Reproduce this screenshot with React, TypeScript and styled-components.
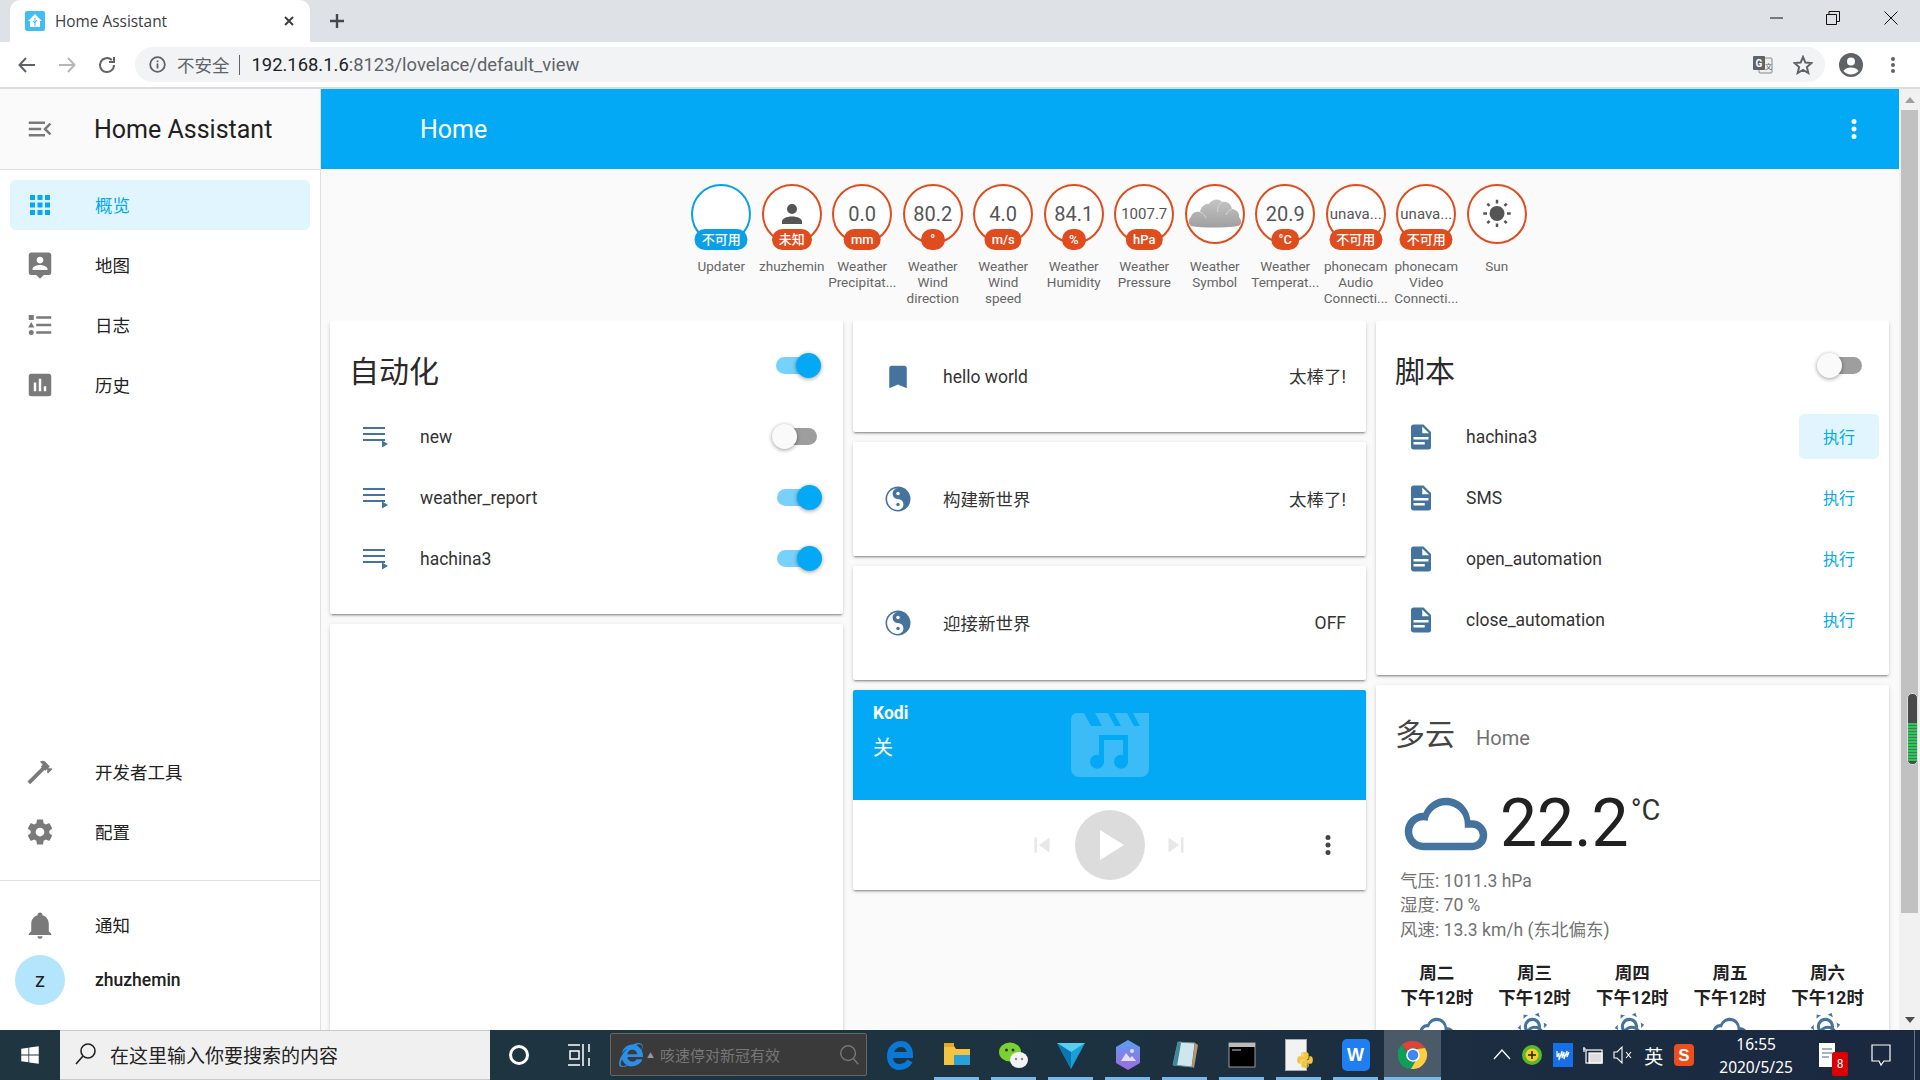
import React from 'react';
import styled, { createGlobalStyle } from 'styled-components';
import { FaInternetExplorer, FaPython, FaWindows } from 'react-icons/fa';

const P = {
  apps: 'M16,20H20V16H16M16,14H20V10H16M10,8H14V4H10M16,8H20V4H16M10,14H14V10H10M4,14H8V10H4M4,20H8V16H4M10,20H14V16H10M4,8H8V4H4V8Z',
  map: 'M18,16H6V15.1C6,13.1 10,12 12,12C14,12 18,13.1 18,15.1M12,5.3C13.5,5.3 14.7,6.5 14.7,8C14.7,9.5 13.5,10.7 12,10.7C10.5,10.7 9.3,9.5 9.3,8C9.3,6.5 10.5,5.3 12,5.3M19,2H5C3.89,2 3,2.89 3,4V18A2,2 0 0,0 5,20H9L12,23L15,20H19A2,2 0 0,0 21,18V4C21,2.89 20.1,2 19,2Z',
  list: 'M5,9.5L7.5,14H2.5L5,9.5M3,4H7V8H3V4M5,20A2,2 0 0,0 7,18A2,2 0 0,0 5,16A2,2 0 0,0 3,18A2,2 0 0,0 5,20M9,5V7H21V5H9M9,19H21V17H9V19M9,13H21V11H9V13Z',
  poll: 'M17,17H15V13H17M13,17H11V7H13M9,17H7V10H9M19,3H5C3.89,3 3,3.89 3,5V19A2,2 0 0,0 5,21H19A2,2 0 0,0 21,19V5C21,3.89 20.1,3 19,3Z',
  hammer: 'M2 19.63L13.43 8.2L12.72 7.5L14.14 6.07L12 3.89C13.2 2.7 15.09 2.7 16.27 3.89L19.87 7.5L18.45 8.91H21.29L22 9.62L18.45 13.21L17.74 12.5V9.62L16.27 11.04L15.56 10.33L4.13 21.76L2 19.63Z',
  cog: 'M12,15.5A3.5,3.5 0 0,1 8.5,12A3.5,3.5 0 0,1 12,8.5A3.5,3.5 0 0,1 15.5,12A3.5,3.5 0 0,1 12,15.5M19.43,12.97C19.47,12.65 19.5,12.33 19.5,12C19.5,11.67 19.47,11.34 19.43,11L21.54,9.37C21.73,9.22 21.78,8.95 21.66,8.73L19.66,5.27C19.54,5.05 19.27,4.96 19.05,5.05L16.56,6.05C16.04,5.66 15.5,5.32 14.87,5.07L14.5,2.42C14.46,2.18 14.25,2 14,2H10C9.75,2 9.54,2.18 9.5,2.42L9.13,5.07C8.5,5.32 7.96,5.66 7.44,6.05L4.95,5.05C4.73,4.96 4.46,5.05 4.34,5.27L2.34,8.73C2.21,8.95 2.27,9.22 2.46,9.37L4.57,11C4.53,11.34 4.5,11.67 4.5,12C4.5,12.33 4.53,12.65 4.57,12.97L2.46,14.63C2.27,14.78 2.21,15.05 2.34,15.27L4.34,18.73C4.46,18.95 4.73,19.03 4.95,18.95L7.44,17.94C7.96,18.34 8.5,18.68 9.13,18.93L9.5,21.58C9.54,21.82 9.75,22 10,22H14C14.25,22 14.46,21.82 14.5,21.58L14.87,18.93C15.5,18.67 16.04,18.34 16.56,17.94L19.05,18.95C19.27,19.03 19.54,18.95 19.66,18.73L21.66,15.27C21.78,15.05 21.73,14.78 21.54,14.63L19.43,12.97Z',
  bell: 'M21,19V20H3V19L5,17V11C5,7.9 7.03,5.17 10,4.29C10,4.19 10,4.1 10,4A2,2 0 0,1 12,2A2,2 0 0,1 14,4C14,4.1 14,4.19 14,4.29C16.97,5.17 19,7.9 19,11V17L21,19M14,21A2,2 0 0,1 12,23A2,2 0 0,1 10,21',
  menuOpen: 'M21,15.61L19.59,17L14.58,12L19.59,7L21,8.39L17.44,12L21,15.61M3,6H16V8H3V6M3,13V11H13V13H3M3,18V16H16V18H3Z',
  dots: 'M12,16A2,2 0 0,1 14,18A2,2 0 0,1 12,20A2,2 0 0,1 10,18A2,2 0 0,1 12,16M12,10A2,2 0 0,1 14,12A2,2 0 0,1 12,14A2,2 0 0,1 10,12A2,2 0 0,1 12,10M12,4A2,2 0 0,1 14,6A2,2 0 0,1 12,8A2,2 0 0,1 10,6A2,2 0 0,1 12,4Z',
  bookmark: 'M17,3H7A2,2 0 0,0 5,5V21L12,18L19,21V5C19,3.89 18.1,3 17,3Z',
  file: 'M13,9H18.5L13,3.5V9M6,2H14L20,8V20A2,2 0 0,1 18,22H6C4.89,22 4,21.1 4,20V4C4,2.89 4.89,2 6,2M15,18V16H6V18H15M18,14V12H6V14H18Z',
  account: 'M12,4A4,4 0 0,1 16,8A4,4 0 0,1 12,12A4,4 0 0,1 8,8A4,4 0 0,1 12,4M12,14C16.42,14 20,15.79 20,18V20H4V18C4,15.79 7.58,14 12,14Z',
  sun: 'M3.55,18.54L4.96,19.95L6.76,18.16L5.34,16.74M11,22.45C11.32,22.45 13,22.45 13,22.45V19.5H11M12,5.5A6,6 0 0,0 6,11.5A6,6 0 0,0 12,17.5A6,6 0 0,0 18,11.5C18,8.18 15.31,5.5 12,5.5M20,12.5H23V10.5H20M17.24,18.16L19.04,19.95L20.45,18.54L18.66,16.74M20.45,4.46L19.04,3.05L17.24,4.84L18.66,6.26M13,0.55H11V3.5H13M4,10.5H1V12.5H4M6.76,4.84L4.96,3.05L3.55,4.46L5.34,6.26L6.76,4.84Z',
  cloudy: 'M6,19A5,5 0 0,1 1,14A5,5 0 0,1 6,9C7,6.65 9.3,5 12,5C15.43,5 18.24,7.66 18.5,11.03L19,11A4,4 0 0,1 23,15A4,4 0 0,1 19,19H6M19,13H17V12A5,5 0 0,0 12,7C9.5,7 7.45,8.82 7.06,11.19C6.73,11.07 6.37,11 6,11A3,3 0 0,0 3,14A3,3 0 0,0 6,17H19A2,2 0 0,0 21,15A2,2 0 0,0 19,13Z',
  partly: 'M12.74,5.47C15.1,6.5 16.35,9.03 15.92,11.46C17.19,12.56 18,14.19 18,16V16.17C18.31,16.06 18.65,16 19,16A3,3 0 0,1 22,19A3,3 0 0,1 19,22H6A4,4 0 0,1 2,18A4,4 0 0,1 6,14H6.27C5,12.45 4.6,10.24 5.5,8.26C6.72,5.5 9.97,4.24 12.74,5.47M11.93,7.3C10.16,6.5 8.09,7.31 7.31,9.07C6.85,10.09 6.93,11.22 7.41,12.13C8.5,10.83 10.16,10 12,10C12.7,10 13.38,10.12 14,10.34C13.94,9.06 13.18,7.86 11.93,7.3M13.55,3.64C13,3.4 12.45,3.23 11.88,3.12L14.37,1.82L15.27,4.71C14.76,4.29 14.19,3.93 13.55,3.64M6.09,4.44C5.6,4.79 5.17,5.19 4.8,5.63L4.91,2.82L7.87,3.5C7.25,3.71 6.65,4.03 6.09,4.44M18,9.71C17.91,9.12 17.78,8.55 17.59,8L19.97,9.5L17.92,11.73C18.03,11.08 18.05,10.4 18,9.71M3.04,11.3C3.11,11.9 3.24,12.47 3.43,13L1.06,11.5L3.1,9.28C3,9.93 2.97,10.61 3.04,11.3M19,18H16V16A4,4 0 0,0 12,12A4,4 0 0,0 8,16H6A2,2 0 0,0 4,18A2,2 0 0,0 6,20H19A1,1 0 0,0 20,19A1,1 0 0,0 19,18Z',
  prev: 'M6,18V6H8V18H6M9.5,12L18,6V18L9.5,12Z',
  next: 'M16,18H18V6H16M6,18L14.5,12L6,6V18Z',
};

const BLUE = '#03a9f4';
const STEEL = '#44739e';
const ORANGE = '#df4c1e';
const GREY = '#7a7a7a';

const Global = createGlobalStyle`
  html, body { margin: 0; padding: 0; width: 1920px; height: 1080px; overflow: hidden; }
  body { font-family: Roboto, "Noto Sans CJK SC", sans-serif; color: #212121; background: #fff; }
  * { box-sizing: border-box; }
`;

const Page = styled.div`
  width: 1920px; height: 1080px; display: flex; flex-direction: column; overflow: hidden;
`;

/* ---------- icon ---------- */
const IconSvg = styled.svg<{ $size: number; $color: string }>`
  width: ${p => p.$size}px; height: ${p => p.$size}px; fill: ${p => p.$color}; flex: none; display: block;
`;
const Mdi = ({ d, size = 30, color = GREY }: { d: string; size?: number; color?: string }) => (
  <IconSvg $size={size} $color={color} viewBox="0 0 24 24"><path d={d} /></IconSvg>
);

/* ---------- browser chrome ---------- */
const TabStrip = styled.div`
  height: 42px; background: #dee1e6; display: flex; align-items: flex-end; padding-left: 10px; flex: none;
`;
const Tab = styled.div`
  width: 300px; height: 42px; background: #fff; border-radius: 10px 10px 0 0; display: flex; align-items: center;
  padding: 0 14px 0 15px; font: 400 15.4px "Open Sans", sans-serif; color: #3c4043;
`;
const Favicon = styled.svg` width: 20px; height: 20px; margin-right: 10px; flex: none; `;
const TabTitle = styled.span` flex: 1; `;
const TabClose = styled.svg` width: 14px; height: 14px; stroke: #3c4043; stroke-width: 2; fill: none; `;
const NewTab = styled.svg`
  width: 16px; height: 16px; stroke: #45484c; stroke-width: 2.4; fill: none; margin: 0 0 13px 19px;
`;
const WinControls = styled.div`
  margin-left: auto; height: 42px; display: flex; align-items: flex-start;
`;
const WinBtn = styled.div<{ $w?: number }>`
  width: ${p => p.$w ?? 58}px; height: 36px; display: flex; align-items: center; justify-content: center;
`;
const WinIcon = styled.svg` width: 14px; height: 14px; stroke: #111; stroke-width: 1; fill: none; `;

const Toolbar = styled.div`
  height: 47px; flex: none; background: #fff; border-bottom: 2px solid #dadce0; display: flex; align-items: flex-start; padding: 5px 0 0 0;
`;
const NavBtn = styled.div`
  width: 40px; height: 35px; display: flex; align-items: center; justify-content: center; flex: none;
  &:first-child { margin-left: 7px; }
`;
const NavIcon = styled.svg<{ $dim?: boolean }>`
  width: 20px; height: 20px; fill: none; stroke: ${p => (p.$dim ? '#b4b7ba' : '#5f6368')}; stroke-width: 2;
`;
const Omnibox = styled.div`
  width: 1690px; margin-left: 8px; height: 35px; border-radius: 18px; background: #f1f3f4; display: flex; align-items: center;
  padding: 0 12px 0 14px; flex: none;
`;
const OmniInfo = styled.svg` width: 17px; height: 17px; flex: none; margin-right: 11px; `;
const Insecure = styled.span`
  font: 400 17.5px "Noto Sans CJK SC", sans-serif; color: #5f6368; padding-right: 9px; margin-right: 12px; position: relative;
  border-right: 1px solid #5f6368; line-height: 20px;
`;
const UrlHost = styled.span` font: 400 18.4px Roboto, sans-serif; color: #202124; `;
const UrlRest = styled.span` font: 400 18.4px Roboto, sans-serif; color: #5f6368; `;
const OmniEnd = styled.div` margin-left: auto; display: flex; align-items: center; gap: 20px; `;
const Translate = styled.svg` width: 20px; height: 20px; `;
const Star = styled.svg` width: 20px; height: 20px; fill: none; stroke: #5f6368; stroke-width: 2; `;
const ToolEnd = styled.div` display: flex; align-items: center; height: 35px; margin-left: 14px; gap: 18px; `;

/* ---------- layout ---------- */
const Body = styled.div` flex: 1; min-height: 0; display: flex; overflow: hidden; `;

const Sidebar = styled.aside`
  width: 321px; flex: none; display: flex; flex-direction: column; background: #fff; border-right: 1px solid #e0e0e0;
`;
const SideHead = styled.div`
  height: 81px; flex: none; display: flex; align-items: center; padding-left: 25px; gap: 39px; background: #fafafa;
  border-bottom: 1px solid #e0e0e0; font-size: 25px; color: #212121;
`;
const NavList = styled.nav<{ $grow?: boolean; $top?: number; $bottom?: number }>`
  display: flex; flex-direction: column; gap: 10px;
  padding: ${p => p.$top ?? 0}px 0 ${p => p.$bottom ?? 0}px;
  ${p => (p.$grow ? 'flex: 1;' : '')}
`;
const NavItem = styled.div<{ $active?: boolean }>`
  width: 300px; height: 50px; margin-left: 10px; border-radius: 5px; display: flex; align-items: center; padding-left: 15px; gap: 40px;
  font-size: 17.5px; background: ${p => (p.$active ? '#e1f5fe' : 'transparent')}; color: ${p => (p.$active ? BLUE : '#212121')};
`;
const NavText = styled.span` margin-top: -2px; `;
const SideRule = styled.div` height: 1px; background: #e0e0e0; flex: none; `;
const UserRow = styled.div`
  display: flex; align-items: center; height: 50px; padding-left: 15px; gap: 30px; font-size: 17.5px; font-weight: 500; margin: -5px 0 25px;
`;
const Avatar = styled.div`
  width: 50px; height: 50px; border-radius: 50%; background: #b3e5fc; display: flex; align-items: center; justify-content: center;
  font-size: 20px; font-weight: 400;
`;

const Main = styled.main` flex: 1; min-width: 0; display: flex; flex-direction: column; background: #fafafa; `;
const AppBar = styled.header`
  height: 80px; flex: none; background: ${BLUE}; color: #fff; display: flex; align-items: center; justify-content: space-between;
  padding: 0 30px 0 99px; font-size: 25px;
`;
const Badges = styled.div`
  height: 152px; flex: none; padding: 15px 2px 0 0; display: flex; justify-content: center;
`;
const BadgeCell = styled.div`
  width: 70.5px; display: flex; flex-direction: column; align-items: center; flex: none;
`;
const Ring = styled.div<{ $blue?: boolean; $small?: boolean }>`
  width: 60px; height: 60px; border-radius: 50%; border: 2px solid ${p => (p.$blue ? '#0a9fe6' : ORANGE)}; background: #fff;
  position: relative; display: flex; align-items: center; justify-content: center; overflow: visible;
  color: #555; font-size: ${p => (p.$small ? 15 : 20)}px; white-space: nowrap; flex: none;
`;
const Pill = styled.div<{ $blue?: boolean }>`
  position: absolute; top: 43px; left: 50%; transform: translateX(-50%); height: 21px; min-width: 24px; padding: 0 7px; border-radius: 11px;
  background: ${p => (p.$blue ? '#0a9fe6' : ORANGE)}; color: #fff; font-size: 13px; font-weight: 500; line-height: 21px; text-align: center; white-space: nowrap;
`;
const BadgeLabels = styled.div` margin-top: 14px; text-align: center; font-size: 13.5px; line-height: 16px; color: #666; `;
const LabelLine = styled.div` white-space: nowrap; `;

const Grid = styled.div`
  flex: 1; min-height: 0; display: grid; grid-template-columns: repeat(3, 513px); gap: 10px; padding-left: 9px; overflow: hidden;
`;
const Column = styled.div` display: flex; flex-direction: column; gap: 10px; `;
const Card = styled.section<{ $h?: number }>`
  background: #fff; border-radius: 2px; flex: none; ${p => (p.$h ? `height: ${p.$h}px;` : '')}
  box-shadow: 0 2px 2px rgba(0,0,0,.14), 0 1px 5px rgba(0,0,0,.12), 0 3px 1px -2px rgba(0,0,0,.2);
`;
const CardHead = styled.div`
  height: 85px; display: flex; justify-content: space-between; padding: 0 27px 0 19px;
`;
const CardTitle = styled.h2`
  margin: 0; font-size: 30px; font-weight: 400; line-height: 40px; padding-top: 31px; color: #2a2a2a;
`;
const HeadSwitch = styled.div` padding-top: 36px; `;
const Track = styled.div<{ $on?: boolean }>`
  width: 40px; height: 17px; border-radius: 9px; position: relative; flex: none;
  background: ${p => (p.$on ? '#78d1fa' : '#9e9e9e')};
`;
const Knob = styled.div<{ $on?: boolean }>`
  position: absolute; top: -4px; left: ${p => (p.$on ? 20 : -5)}px; width: 25px; height: 25px; border-radius: 50%;
  background: ${p => (p.$on ? BLUE : '#fafafa')};
  box-shadow: 0 1px 4px rgba(0,0,0,.4);
`;
const Switch = ({ on }: { on?: boolean }) => <Track $on={on}><Knob $on={on} /></Track>;

const Row = styled.div`
  height: 61px; display: flex; align-items: center; padding: 0 26px 0 30px; font-size: 17.5px; color: #333;
`;
const RowName = styled.div<{ $cjk?: boolean }>` margin-left: 30px; flex: 1; ${p => (p.$cjk ? 'margin-top: -2px;' : '')} `;
const RowBtn = styled.div<{ $hover?: boolean }>`
  width: 80px; height: 45px; margin-right: -16px; border-radius: 5px; display: flex; align-items: center; justify-content: center;
  padding-bottom: 2px; color: ${BLUE}; font-size: 16px; background: ${p => (p.$hover ? '#e1f5fe' : 'transparent')};
`;
const PlayIcon = styled.svg` width: 30px; height: 30px; fill: ${STEEL}; flex: none; `;
const PlaylistIcon = () => (
  <PlayIcon viewBox="0 0 30 30">
    <rect x="3" y="5" width="22" height="2" /><rect x="3" y="11" width="22" height="2" /><rect x="3" y="17" width="22" height="2" />
    <path d="M22,18.5L28,22L22,25.5Z" />
  </PlayIcon>
);
const EntityCard = styled(Card)`
  display: flex; align-items: center; padding: 0 20px 0 30px; font-size: 17.5px; color: #333;
`;
const EntityState = styled.div<{ $cjk?: boolean }>` margin-left: auto; ${p => (p.$cjk ? 'margin-top: -2px;' : '')} `;
const YinSvg = styled.svg` width: 30px; height: 30px; flex: none; `;
const YinYang = () => (
  <YinSvg viewBox="0 0 24 24">
    <circle cx="12" cy="12" r="10" fill={STEEL} />
    <path d="M12,3.3A8.7,8.7 0 0,0 12,20.7A4.35,4.35 0 0,0 12,12A4.35,4.35 0 0,1 12,3.3Z" fill="#fff" />
    <circle cx="12" cy="7.6" r="1.4" fill="#fff" />
    <circle cx="12" cy="16.4" r="1.4" fill={STEEL} />
  </YinSvg>
);

/* ---------- media ---------- */
const MediaHead = styled.div`
  height: 110px; background: ${BLUE}; color: #fff; padding: 12px 20px 0; position: relative; border-radius: 2px 2px 0 0;
`;
const MediaName = styled.div` font-size: 17.5px; font-weight: 700; line-height: 22px; `;
const MediaState = styled.div` font-size: 20px; line-height: 28px; margin-top: 10px; `;
const MediaArt = styled.svg`
  position: absolute; left: 218px; top: 23px; width: 78px; height: 64px; fill: #fff; opacity: .22;
`;
const MediaBar = styled.div`
  height: 90px; position: relative; display: flex; align-items: center; justify-content: center; gap: 18px;
`;
const NextWrap = styled.div` margin: 0 2px 0 -2px; `;
const PlayBtn = styled.div`
  width: 70px; height: 70px; border-radius: 50%; background: #dcdcdc; display: flex; align-items: center; justify-content: center;
`;
const PlayTri = styled.svg` width: 24px; height: 30px; fill: #fff; margin-left: 4px; `;
const MediaMore = styled.div` position: absolute; right: 23px; top: 30px; `;

/* ---------- weather ---------- */
const WeatherCard = styled(Card)` padding: 30px 12px 0 0; height: 500px; `;
const WeatherTitle = styled.div`
  display: flex; align-items: baseline; padding-left: 19px; height: 40px; line-height: 40px; font-size: 30px; color: #444;
`;
const WeatherPlace = styled.span` font-size: 20px; color: #727272; margin-left: 21px; `;
const WeatherNow = styled.div` margin-top: 23px; height: 91px; padding-left: 25px; display: flex; align-items: center; gap: 9px; `;
const Temp = styled.div` font-size: 66px; line-height: 90px; color: #212121; `;
const TempUnit = styled.div` font-size: 29px; line-height: 30px; align-self: flex-start; margin: 17px 0 0 -7px; color: #333; `;
const Attrs = styled.div` padding-left: 24px; font-size: 17.5px; line-height: 24.4px; color: #727272; `;
const Forecast = styled.div`
  margin-top: 19px; padding-left: 12px; display: grid; grid-template-columns: repeat(5, 97.7px);
`;
const ForecastCol = styled.div`
  display: flex; flex-direction: column; align-items: center; font-size: 17.5px; font-weight: 700; line-height: 24.4px; color: #212121;
`;

/* ---------- scrollbar ---------- */
const Scrollbar = styled.div`
  width: 21px; flex: none; background: #f1f1f1; display: flex; flex-direction: column; padding-left: 2px; padding-right: 2px; position: relative;
  align-items: stretch;
`;
const ScrollArrow = styled.div<{ $h: number }>`
  height: ${p => p.$h}px; flex: none; display: flex; align-items: center; justify-content: center;
`;
const ArrowTri = styled.svg<{ $c: string }>` width: 10px; height: 6px; fill: ${p => p.$c}; `;
const Thumb = styled.div` height: 803px; background: #c1c1c1; flex: none; `;
const ScrollFill = styled.div` flex: 1; `;
const Pillbar = styled.div`
  position: absolute; top: 604px; left: 8px; width: 11px; height: 72px; border-radius: 5px; background: #4a4a4a;
  border: 1px solid #ddd; overflow: hidden; padding-top: 29px;
`;
const PillGreen = styled.div`
  height: 38px; background: repeating-linear-gradient(180deg, #22cc55 0 2px, #55705c 2px 3px);
`;

/* ---------- taskbar ---------- */
const Taskbar = styled.footer`
  height: 50px; flex: none; display: flex; align-items: stretch; color: #fff;
  background: linear-gradient(90deg, #1f3640 0%, #1d3340 50%, #1a2840 100%);
`;
const StartBtn = styled.div` width: 60px; display: flex; align-items: center; justify-content: center; flex: none; `;
const SearchBox = styled.div`
  width: 430px; flex: none; background: #f0f0f0; display: flex; align-items: center; padding: 0 0 2px 14px; gap: 12px; color: #222;
  font: 400 19px "Noto Sans CJK SC", sans-serif; border: 1px solid #c8c8c8; border-width: 1px 0;
`;
const SearchGlass = styled.svg` width: 24px; height: 24px; fill: none; stroke: #222; stroke-width: 1.6; flex: none; `;
const AdGlass = styled(SearchGlass)` stroke: #777; width: 22px; height: 22px; `;
const BarSlot = styled.div<{ $w: number }>` width: ${p => p.$w}px; flex: none; display: flex; align-items: center; justify-content: center; `;
const TaskSvg = styled.svg` width: 26px; height: 26px; fill: none; stroke: #fff; `;
const AdWidget = styled.div`
  width: 257px; flex: none; margin: 3px 4px 4px 0; background: #3a3a3a; border: 1px solid #666; border-radius: 2px; display: flex; align-items: center;
  padding: 0 6px 0 8px; font: 400 15px "Noto Sans CJK SC", sans-serif; color: #777;
`;
const AdCaret = styled.span` font-size: 7px; color: #999; margin: 0 6px 0 4px; `;
const AdText = styled.span` flex: 1; `;
const Tile = styled.div<{ $running?: boolean; $active?: boolean }>`
  width: 57px; flex: none; position: relative; display: flex; align-items: center; justify-content: center;
  ${p => (p.$active ? 'background: #4a5a68;' : '')}
  ${p => (p.$running ? `&::after { content: ''; position: absolute; bottom: 0; height: 3px; left: ${p.$active ? 0 : 6}px; right: ${p.$active ? 0 : 6}px; background: #76b9ed; }` : '')}
`;
const LogoSvg = styled.svg` width: 30px; height: 30px; flex: none; `;
const CloudSvg = styled.svg` width: 54px; height: 30px; flex: none; margin-bottom: 2px; `;
const WpsTile = styled.div`
  width: 28px; height: 32px; border-radius: 5px; background: #1f7ff0; color: #fff; font: 700 18px "Liberation Sans", sans-serif;
  display: flex; align-items: center; justify-content: center;
`;
const DocFile = styled.div`
  width: 22px; height: 32px; background: #f2f2f2; border: 1px solid #aaa; position: relative; display: flex; align-items: flex-end; justify-content: flex-end;
  margin-left: -6px;
`;
const DocPy = styled.div` margin: 0 -8px 1px 0; display: flex; `;
const Tray = styled.div` margin-left: 46px; display: flex; align-items: stretch; flex: none; `;
const TraySlot = styled.div`
  width: 30.3px; display: flex; align-items: center; justify-content: center; flex: none; font: 400 19px "Noto Sans CJK SC", sans-serif;
`;
const TraySvg = styled.svg` width: 22px; height: 24px; flex: none; `;
const NotifyDoc = styled(TraySvg)` height: 30px; margin-left: -6px; `;
const Clock = styled.div`
  width: 100px; margin-left: 7px; flex: none; display: flex; flex-direction: column; align-items: center; justify-content: center; gap: 5px;
  font: 400 15.5px/18px "Noto Sans", sans-serif;
`;
const NotifySlot = styled.div` width: 50px; flex: none; display: flex; align-items: center; justify-content: center; position: relative; `;
const RedBadge = styled.div`
  position: absolute; left: 26px; top: 22px; width: 16px; height: 24px; background: #d00; color: #fff; font: 400 12px Roboto, sans-serif;
  display: flex; align-items: center; justify-content: center; border-radius: 2px;
`;
const ChatSlot = styled.div` width: 45px; margin-left: 2px; flex: none; display: flex; align-items: center; justify-content: center; `;
const DesktopEdge = styled.div` width: 15px; flex: none; position: relative; &::after { content: ''; position: absolute; left: 11px; top: 0; bottom: 0; width: 1px; background: #6a7683; } `;

/* ---------- data ---------- */
const badges: { v?: string; icon?: string; cloud?: boolean; small?: boolean; unit?: string; blue?: boolean; label: string[] }[] = [
  { unit: '不可用', blue: true, label: ['Updater'] },
  { icon: P.account, unit: '未知', label: ['zhuzhemin'] },
  { v: '0.0', unit: 'mm', label: ['Weather', 'Precipitat...'] },
  { v: '80.2', unit: '°', label: ['Weather', 'Wind', 'direction'] },
  { v: '4.0', unit: 'm/s', label: ['Weather', 'Wind', 'speed'] },
  { v: '84.1', unit: '%', label: ['Weather', 'Humidity'] },
  { v: '1007.7', small: true, unit: 'hPa', label: ['Weather', 'Pressure'] },
  { cloud: true, label: ['Weather', 'Symbol'] },
  { v: '20.9', unit: '°C', label: ['Weather', 'Temperat...'] },
  { v: 'unava...', small: true, unit: '不可用', label: ['phonecam', 'Audio', 'Connecti...'] },
  { v: 'unava...', small: true, unit: '不可用', label: ['phonecam', 'Video', 'Connecti...'] },
  { icon: P.sun, label: ['Sun'] },
];

const forecast = [
  ['周二', P.cloudy], ['周三', P.partly], ['周四', P.partly], ['周五', P.cloudy], ['周六', P.partly],
];

const CloudSymbol = () => (
  <CloudSvg viewBox="0 0 54 30">
    <defs>
      <linearGradient id="cl" x1="0" y1="0" x2="0" y2="1">
        <stop offset="0" stopColor="#c4c4c4" /><stop offset="1" stopColor="#a0a0a0" />
      </linearGradient>
    </defs>
    <path fill="url(#cl)" d="M3,28C0,26 0,21 3,19C4,14 9,13 12,14C13,9 17,5 21,6C24,1 31,0 34,4C38,3 43,5 44,11C48,11 52,15 51,19C54,22 54,27 50,28C36,30 14,30 3,28Z" />
    <path fill="none" stroke="#d8d8d8" strokeWidth="1" d="M12,14C15,15 17,18 18,20M34,4C30,7 29,11 30,14M44,11C41,12 39,14 38,17" />
  </CloudSvg>
);

export default function App() {
  return (
    <Page>
      <Global />
      <TabStrip>
        <Tab>
          <Favicon viewBox="0 0 20 20">
            <rect width="20" height="20" rx="2" fill="#41bdf5" />
            <path d="M10,3L17,10H15V16H5V10H3Z" fill="#fff" />
            <path d="M10,7V15M8,10L10,12L12,9" stroke="#41bdf5" strokeWidth="1" fill="none" />
          </Favicon>
          <TabTitle>Home Assistant</TabTitle>
          <TabClose viewBox="0 0 14 14"><path d="M3,3L11,11M11,3L3,11" /></TabClose>
        </Tab>
        <NewTab viewBox="0 0 16 16"><path d="M8,1V15M1,8H15" /></NewTab>
        <WinControls>
          <WinBtn $w={54}><WinIcon viewBox="0 0 14 14"><path d="M0,7H13" /></WinIcon></WinBtn>
          <WinBtn><WinIcon viewBox="0 0 14 14"><path d="M.5,3.5H10.5V13.5H.5ZM3,3.5V.5H13.5V10.5H10.5" /></WinIcon></WinBtn>
          <WinBtn><WinIcon viewBox="0 0 14 14"><path d="M.5,.5L13.5,13.5M13.5,.5L.5,13.5" /></WinIcon></WinBtn>
        </WinControls>
      </TabStrip>
      <Toolbar>
        <NavBtn><NavIcon viewBox="0 0 20 20"><path d="M18,10H3M9,3L2.5,10L9,17" /></NavIcon></NavBtn>
        <NavBtn><NavIcon $dim viewBox="0 0 20 20"><path d="M2,10H17M11,3L17.5,10L11,17" /></NavIcon></NavBtn>
        <NavBtn><NavIcon viewBox="0 0 20 20"><path d="M17,10A7,7 0 1 1 14.8,5M17,2V7H12" /></NavIcon></NavBtn>
        <Omnibox>
          <OmniInfo viewBox="0 0 17 17">
            <circle cx="8.5" cy="8.5" r="7.3" fill="none" stroke="#5f6368" strokeWidth="1.8" />
            <rect x="7.6" y="7.5" width="1.8" height="5" fill="#5f6368" /><rect x="7.6" y="4.4" width="1.8" height="1.8" fill="#5f6368" />
          </OmniInfo>
          <Insecure>不安全</Insecure>
          <UrlHost>192.168.1.6</UrlHost><UrlRest>:8123/lovelace/default_view</UrlRest>
          <OmniEnd>
            <Translate viewBox="0 0 20 20">
              <rect x="6" y="3" width="13" height="15" rx="1" fill="#eee" stroke="#888" />
              <rect x="0" y="1" width="12" height="14" rx="1" fill="#5f6368" />
              <text x="2.5" y="11.5" fontSize="10" fontWeight="700" fill="#fff" fontFamily="Roboto">G</text>
              <text x="12" y="14" fontSize="7" fill="#5f6368" fontFamily="Noto Sans CJK SC">文</text>
            </Translate>
            <Star viewBox="0 0 20 20"><path d="M10,2L12.4,7.6L18.5,8.1L13.9,12.1L15.3,18L10,14.9L4.7,18L6.1,12.1L1.5,8.1L7.6,7.6Z" /></Star>
          </OmniEnd>
        </Omnibox>
        <ToolEnd>
          <IconSvg $size={24} $color="#5f6368" viewBox="0 0 24 24">
            <path fillRule="evenodd" d="M12,0A12,12 0 1 1 12,24A12,12 0 1 1 12,0ZM12,4.5A4,4 0 1 0 12,12.5A4,4 0 1 0 12,4.5ZM12,14.5C8.5,14.5 5.5,16 4.5,18A9.8,9.8 0 0 0 19.5,18C18.5,16 15.5,14.5 12,14.5Z" />
          </IconSvg>
          <Mdi d={P.dots} size={24} color="#5f6368" />
        </ToolEnd>
      </Toolbar>

      <Body>
        <Sidebar>
          <SideHead><Mdi d={P.menuOpen} /><span>Home Assistant</span></SideHead>
          <NavList $grow $top={10}>
            <NavItem $active><Mdi d={P.apps} color={BLUE} /><NavText>概览</NavText></NavItem>
            <NavItem><Mdi d={P.map} /><NavText>地图</NavText></NavItem>
            <NavItem><Mdi d={P.list} /><NavText>日志</NavText></NavItem>
            <NavItem><Mdi d={P.poll} /><NavText>历史</NavText></NavItem>
          </NavList>
          <NavList $bottom={23}>
            <NavItem><Mdi d={P.hammer} /><NavText>开发者工具</NavText></NavItem>
            <NavItem><Mdi d={P.cog} /><NavText>配置</NavText></NavItem>
          </NavList>
          <SideRule />
          <NavList $top={19}>
            <NavItem><Mdi d={P.bell} /><NavText>通知</NavText></NavItem>
            <UserRow><Avatar>z</Avatar><span>zhuzhemin</span></UserRow>
          </NavList>
        </Sidebar>

        <Main>
          <AppBar><span>Home</span><Mdi d={P.dots} color="#fff" /></AppBar>
          <Badges>
            {badges.map((b, i) => (
              <BadgeCell key={i}>
                <Ring $blue={b.blue} $small={b.small}>
                  {b.v}
                  {b.icon && <Mdi d={b.icon} color="#555" />}
                  {b.cloud && <CloudSymbol />}
                  {b.unit && <Pill $blue={b.blue}>{b.unit}</Pill>}
                </Ring>
                <BadgeLabels>{b.label.map(l => <LabelLine key={l}>{l}</LabelLine>)}</BadgeLabels>
              </BadgeCell>
            ))}
          </Badges>
          <Grid>
            <Column>
              <Card $h={293}>
                <CardHead>
                  <CardTitle>自动化</CardTitle>
                  <HeadSwitch><Switch on /></HeadSwitch>
                </CardHead>
                {[['new', false], ['weather_report', true], ['hachina3', true]].map(([n, on]) => (
                  <Row key={String(n)}>
                    <PlaylistIcon /><RowName>{n}</RowName><Switch on={Boolean(on)} />
                  </Row>
                ))}
              </Card>
              <Card $h={500} />
            </Column>
            <Column>
              <EntityCard $h={111}><Mdi d={P.bookmark} color={STEEL} /><RowName>hello world</RowName><EntityState $cjk>太棒了!</EntityState></EntityCard>
              <EntityCard $h={114}><YinYang /><RowName $cjk>构建新世界</RowName><EntityState $cjk>太棒了!</EntityState></EntityCard>
              <EntityCard $h={114}><YinYang /><RowName $cjk>迎接新世界</RowName><EntityState>OFF</EntityState></EntityCard>
              <Card $h={200}>
                <MediaHead>
                  <MediaName>Kodi</MediaName>
                  <MediaState>关</MediaState>
                  <MediaArt viewBox="0 0 78 64">
                    <path fillRule="evenodd" d="M0,6A6,6 0 0 1 6,0H13L20,13H78V56A8,8 0 0 1 70,64H8A8,8 0 0 1 0,56ZM28,22V42A7,7 0 1 0 33,48V27H52V42A7,7 0 1 0 57,48V22Z" />
                    <path d="M24,0H37L44,13H31ZM43,0H56L63,13H50ZM62,0H78V13H69Z" />
                  </MediaArt>
                </MediaHead>
                <MediaBar>
                  <Mdi d={P.prev} color="#e8e8e8" />
                  <PlayBtn><PlayTri viewBox="0 0 24 30"><path d="M0,0L24,15L0,30Z" /></PlayTri></PlayBtn>
                  <NextWrap><Mdi d={P.next} color="#e8e8e8" /></NextWrap>
                  <MediaMore><Mdi d={P.dots} color="#444" /></MediaMore>
                </MediaBar>
              </Card>
            </Column>
            <Column>
              <Card $h={354}>
                <CardHead>
                  <CardTitle>脚本</CardTitle>
                  <HeadSwitch><Switch /></HeadSwitch>
                </CardHead>
                {['hachina3', 'SMS', 'open_automation', 'close_automation'].map((n, i) => (
                  <Row key={n}>
                    <Mdi d={P.file} color={STEEL} /><RowName>{n}</RowName><RowBtn $hover={i === 0}>执行</RowBtn>
                  </Row>
                ))}
              </Card>
              <WeatherCard>
                <WeatherTitle>多云<WeatherPlace>Home</WeatherPlace></WeatherTitle>
                <WeatherNow>
                  <Mdi d={P.cloudy} size={90} color={STEEL} />
                  <Temp>22.2</Temp>
                  <TempUnit>°C</TempUnit>
                </WeatherNow>
                <Attrs>
                  <div>气压: 1011.3 hPa</div>
                  <div>湿度: 70 %</div>
                  <div>风速: 13.3 km/h (东北偏东)</div>
                </Attrs>
                <Forecast>
                  {forecast.map(([d, ic]) => (
                    <ForecastCol key={d}>
                      <div>{d}</div>
                      <div>下午12时</div>
                      <Mdi d={ic} size={37.5} color={STEEL} />
                    </ForecastCol>
                  ))}
                </Forecast>
              </WeatherCard>
            </Column>
          </Grid>
        </Main>

        <Scrollbar>
          <ScrollArrow $h={21}><ArrowTri $c="#a0a0a0" viewBox="0 0 10 6"><path d="M5,0L10,6H0Z" /></ArrowTri></ScrollArrow>
          <Thumb />
          <ScrollFill />
          <ScrollArrow $h={21}><ArrowTri $c="#505050" viewBox="0 0 10 6"><path d="M0,0H10L5,6Z" /></ArrowTri></ScrollArrow>
          <Pillbar><PillGreen /></Pillbar>
        </Scrollbar>
      </Body>

      <Taskbar>
        <StartBtn><FaWindows size={20} color="#fff" /></StartBtn>
        <SearchBox>
          <SearchGlass viewBox="0 0 24 24"><circle cx="14" cy="9" r="7" /><path d="M9,14L2,22" /></SearchGlass>
          <span>在这里输入你要搜索的内容</span>
        </SearchBox>
        <BarSlot $w={58}><TaskSvg viewBox="0 0 26 26" strokeWidth="3"><circle cx="13" cy="13" r="8.5" /></TaskSvg></BarSlot>
        <BarSlot $w={62}>
          <TaskSvg viewBox="0 0 26 26" strokeWidth="1.5"><path d="M2,3H14M2,23H14M4,9H13V17H4ZM17,2V24M17,9V17M23,2V10M23,16V24" /></TaskSvg>
        </BarSlot>
        <AdWidget>
          <FaInternetExplorer size={24} color="#2b8fe8" />
          <AdCaret>▲</AdCaret>
          <AdText>咳速停对新冠有效</AdText>
          <AdGlass viewBox="0 0 24 24"><circle cx="11" cy="10" r="8" /><path d="M17,16L22,22" /></AdGlass>
        </AdWidget>
        <Tile>
          <LogoSvg viewBox="0 0 30 30">
            <path fill="none" stroke="#0a78d4" strokeWidth="6" d="M25,21C22,26 17,27 14,27C8,27 5,22 5,16C5,9 10,4 16,4C22,4 25,9 25,15H7" />
          </LogoSvg>
        </Tile>
        <Tile $running>
          <LogoSvg viewBox="0 0 30 30">
            <path d="M2,6H12L14,9H28V25H2Z" fill="#f5c342" />
            <rect x="2" y="3" width="10" height="4" fill="#e5a823" />
            <rect x="12" y="15" width="16" height="10" fill="#2a9fd8" />
          </LogoSvg>
        </Tile>
        <Tile $running>
          <LogoSvg viewBox="0 0 30 30">
            <ellipse cx="11" cy="12" rx="11" ry="9.5" fill="#7bd12f" />
            <ellipse cx="20" cy="20" rx="9" ry="8" fill="#f3f3f3" />
            <circle cx="7.5" cy="10" r="1.5" fill="#333" /><circle cx="14" cy="10" r="1.5" fill="#333" />
            <circle cx="17" cy="19" r="1.2" fill="#888" /><circle cx="23" cy="19" r="1.2" fill="#888" />
          </LogoSvg>
        </Tile>
        <Tile $running>
          <LogoSvg viewBox="0 0 30 30">
            <path d="M1,3H29L15,29Z" fill="#1a9fd8" />
            <path d="M1,3H29L15,12Z" fill="#58cfee" />
            <path d="M15,12L15,29L1,3Z" fill="#0a78b0" />
          </LogoSvg>
        </Tile>
        <Tile $running>
          <LogoSvg viewBox="0 0 30 30">
            <defs><linearGradient id="hx" x1="0" y1="0" x2="0" y2="1"><stop offset="0" stopColor="#5aa0ef" /><stop offset="1" stopColor="#a06ae0" /></linearGradient></defs>
            <path d="M15,0L27,7V23L15,30L3,23V7Z" fill="url(#hx)" />
            <path d="M8,21L13,13L17,18L19,16L23,21Z" fill="#e8dcff" /><circle cx="19" cy="11" r="2" fill="#e8dcff" />
          </LogoSvg>
        </Tile>
        <Tile $running>
          <LogoSvg viewBox="0 0 30 30">
            <path d="M8,2L25,3L22,27L3,25Z" fill="#cfe6ee" stroke="#6d8a95" />
            <path d="M3,25L8,2L11,3L7,26Z" fill="#3a8a9a" />
            <path d="M25,3L28,5L24,28L22,27Z" fill="#b8966a" />
          </LogoSvg>
        </Tile>
        <Tile $running>
          <LogoSvg viewBox="0 0 30 30">
            <rect x="2" y="3" width="26" height="24" fill="#000" stroke="#999" />
            <rect x="2" y="3" width="26" height="4" fill="#bbb" />
            <path d="M5,10H14" stroke="#ccc" />
          </LogoSvg>
        </Tile>
        <Tile $running>
          <DocFile><DocPy><FaPython size={18} color="#f2c53d" /></DocPy></DocFile>
        </Tile>
        <Tile $running><WpsTile>W</WpsTile></Tile>
        <Tile $running $active>
          <LogoSvg viewBox="0 0 30 30">
            <path d="M15,1A14,14 0 0 1 27.1,8H15A7,7 0 0 0 8.9,11.5L4,4.6A14,14 0 0 1 15,1Z" fill="#db4437" />
            <path d="M4,4.6L10,15A7,7 0 0 0 18.5,21L13,28.9A14,14 0 0 1 4,4.6Z" fill="#0f9d58" />
            <path d="M27.1,8A14,14 0 0 1 13,28.9L21,15A7,7 0 0 0 18,9Z" fill="#ffcd40" />
            <circle cx="15" cy="15" r="6.8" fill="#fff" /><circle cx="15" cy="15" r="5.3" fill="#4285f4" />
          </LogoSvg>
        </Tile>
        <Tray>
          <TraySlot><TraySvg viewBox="0 0 22 24" fill="none" stroke="#fff" strokeWidth="1.3"><path d="M3,16L11,7L19,16" /></TraySvg></TraySlot>
          <TraySlot>
            <TraySvg viewBox="0 0 22 24"><circle cx="11" cy="12" r="10" fill="#5ab82e" /><circle cx="11" cy="12" r="6.5" fill="#f3d021" /><path d="M11,8V16M7,12H15" stroke="#222" strokeWidth="1.6" /></TraySvg>
          </TraySlot>
          <TraySlot>
            <TraySvg viewBox="0 0 22 24"><rect x="1" y="0" width="20" height="24" fill="#1570e8" /><path d="M5,8V14L7,10V17L10,8V15L12,9V16L15,8V14L17,9" stroke="#fff" strokeWidth="1.2" fill="none" /></TraySvg>
          </TraySlot>
          <TraySlot>
            <TraySvg viewBox="0 0 22 24" fill="none" stroke="#fff" strokeWidth="1.2"><rect x="4" y="7" width="16" height="13" /><rect x="7" y="10" width="13" height="10" fill="#ddd" /><path d="M2,4V9M1,6H4" /></TraySvg>
          </TraySlot>
          <TraySlot>
            <TraySvg viewBox="0 0 22 24" fill="none" stroke="#fff" strokeWidth="1.1"><path d="M2,9H5L10,4V20L5,15H2ZM14,9L19,15M19,9L14,15" /></TraySvg>
          </TraySlot>
          <TraySlot>英</TraySlot>
          <TraySlot>
            <TraySvg viewBox="0 0 22 24"><rect x="1" y="1" width="20" height="22" rx="4" fill="#ee4e1b" /><text x="11" y="18" fontSize="17" fontWeight="700" fill="#fff" textAnchor="middle" fontFamily="Liberation Sans">S</text></TraySvg>
          </TraySlot>
        </Tray>
        <Clock><span>16:55</span><span>2020/5/25</span></Clock>
        <NotifySlot>
          <NotifyDoc viewBox="0 0 22 24"><path d="M2,0H18V24H2Z" fill="#fff" /><path d="M5,6H15M5,10H15M5,14H12" stroke="#8a99a8" strokeWidth="1.3" /></NotifyDoc>
          <RedBadge>8</RedBadge>
        </NotifySlot>
        <ChatSlot>
          <TraySvg viewBox="0 0 22 24" fill="none" stroke="#fff" strokeWidth="1.2"><path d="M2,2H20V18H14L11,22L9,18H2Z" /></TraySvg>
        </ChatSlot>
        <DesktopEdge />
      </Taskbar>
    </Page>
  );
}
